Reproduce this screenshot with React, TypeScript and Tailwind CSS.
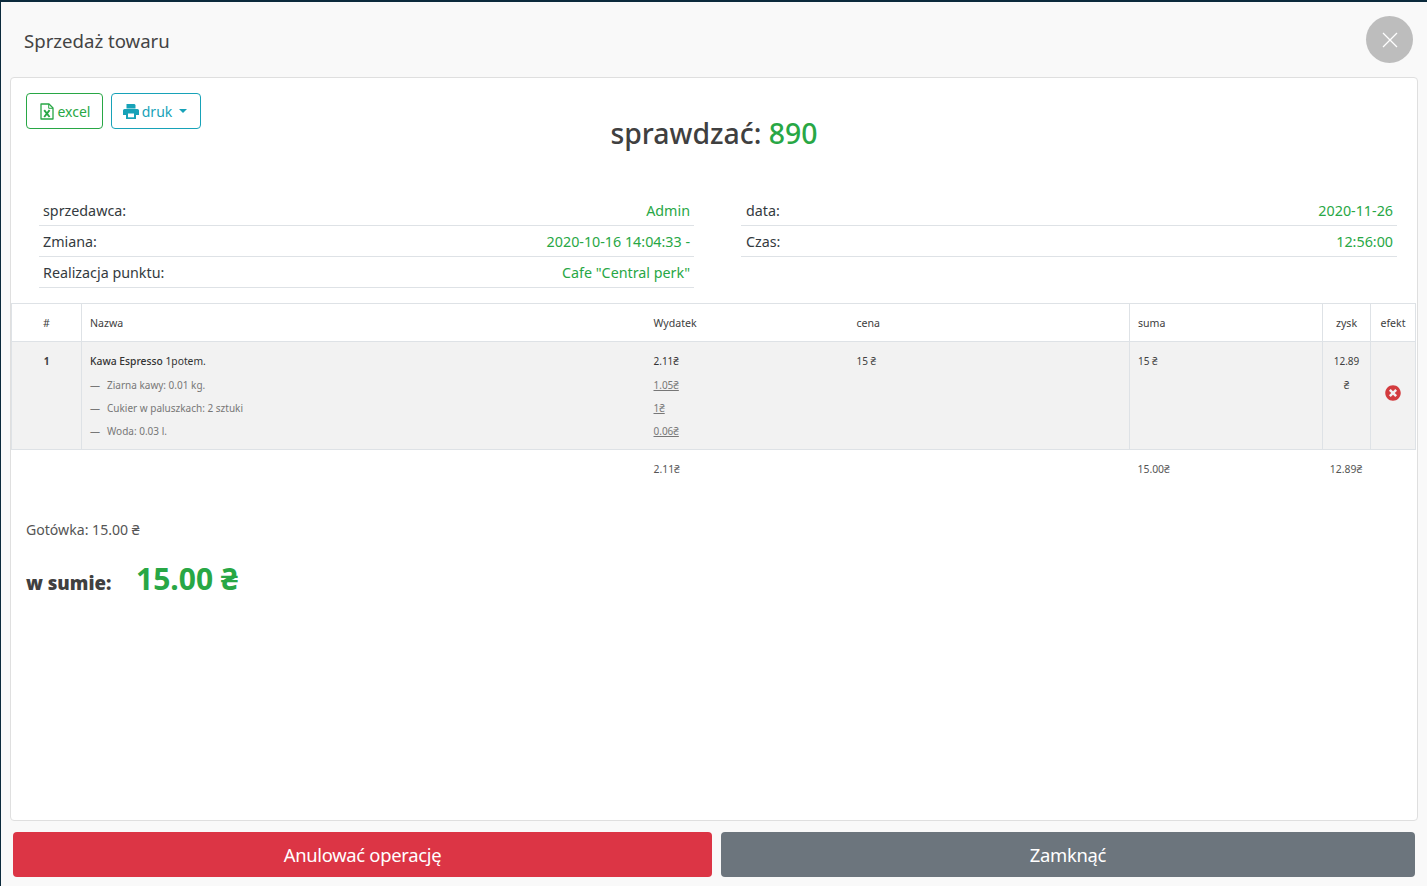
import React from "react";
import { FaTimesCircle } from "react-icons/fa";

const font = { fontFamily: '"Noto Sans", "Open Sans", sans-serif' };

function InfoRow({ label, value, inset }: { label: string; value: string; inset?: boolean }) {
  return (
    <div className={`flex h-[31px] items-center justify-between border-b border-[#dee2e6] pr-[4px] pt-[2px] text-[14.3px] ${inset ? "pl-[5px]" : "pl-[4px]"}`}>
      <span className="text-[#343a40]">{label}</span>
      <span className="text-[#28a745]">{value}</span>
    </div>
  );
}

function ExcelIcon() {
  return (
    <svg width="14" height="17" viewBox="0 0 14 17" fill="none" className="shrink-0">
      <path d="M1 1h8l4 4v11H1z" stroke="#28a745" strokeWidth="1.3" strokeLinejoin="round" />
      <path d="M8.7 1v4.3H13" stroke="#28a745" strokeWidth="1" />
      <path d="M4.2 7.2 9.6 14M9.6 7.2 4.2 14" stroke="#28a745" strokeWidth="1.9" />
    </svg>
  );
}

function PrinterIcon() {
  return (
    <svg width="16" height="15" viewBox="0 0 16 15" className="shrink-0" fill="#17a2b8">
      <path d="M3.5 0h8l1 1v3.5h-9z" />
      <path d="M1.5 5h13A1.5 1.5 0 0 1 16 6.5V11h-3v4H3v-4H0V6.500A1.500 1.500 0 0 1 1.500 5z" />
      <rect x="5" y="9.500" width="6" height="3.800" fill="white" />
    </svg>
  );
}

export default function App() {
  return (
    <div style={font} className="h-[886px] w-[1427px] overflow-hidden bg-[#0b2a3c] pl-[1px] pt-[2px] text-[#404040]">
      <div className="flex h-[884px] flex-col bg-[#f9f9f9]">
        <header className="flex h-[75px] shrink-0 items-center justify-between pl-[23px] pr-[14px]">
          <h1 className="pt-[2px] text-[18.6px] text-[#444]">Sprzedaż towaru</h1>
          <button className="flex h-[47px] w-[47px] items-center justify-center rounded-full bg-[#bdbdbd]">
            <svg width="16" height="16" viewBox="0 0 16 16" stroke="white" strokeWidth="1.3" fill="none">
              <path d="M1 1 15 15M15 1 1 15" />
            </svg>
          </button>
        </header>

        <main className="ml-[9px] mr-[9px] flex h-[744px] shrink-0 flex-col rounded-[4px] border border-[#dfdfdf] bg-white">
          <div className="relative h-[117px] shrink-0">
            <div className="absolute left-[15px] top-[15px] flex gap-[8px] text-[14px]">
              <button className="flex h-[36px] w-[77px] items-center justify-center gap-[4px] rounded-[4px] border border-[#28a745] pl-[1px] text-[#28a745]">
                <ExcelIcon />
                excel
              </button>
              <button className="flex h-[36px] w-[90px] items-center justify-center gap-[3px] rounded-[4px] border border-[#17a2b8] pr-[2px] text-[#17a2b8]">
                <PrinterIcon />
                druk
                <span className="ml-[4px] h-0 w-0 border-x-[4.5px] border-t-[4.5px] border-x-transparent border-t-[#17a2b8]" />
              </button>
            </div>
            <div className="pt-[34px] text-center text-[28.400px] font-medium leading-[42px] text-[#404040]">
              sprawdzać: <span className="text-[#28a745]">890</span>
            </div>
          </div>

          <div className="flex h-[108px] shrink-0 gap-[47px] pl-[28px] pr-[20px]">
            <div className="w-[655px]">
              <InfoRow label="sprzedawca:" value="Admin" />
              <InfoRow label="Zmiana:" value="2020-10-16 14:04:33 -" />
              <InfoRow label="Realizacja punktu:" value={'Cafe "Central perk"'} />
            </div>
            <div className="flex-1">
              <InfoRow inset label="data:" value="2020-11-26" />
              <InfoRow inset label="Czas:" value="12:56:00" />
            </div>
          </div>

          <table className="w-[1405px] table-fixed border-collapse text-[10px] text-[#404040]">
            <colgroup>
              <col className="w-[70px]" />
              <col className="w-[564px]" />
              <col className="w-[203px]" />
              <col className="w-[281px]" />
              <col className="w-[193px]" />
              <col className="w-[48px]" />
              <col className="w-[45px]" />
            </colgroup>
            <thead>
              <tr className="h-[38px] border-y border-[#dee2e6] text-[10.6px]">
                <th className="border-x border-[#dee2e6] pt-[2px] text-center font-normal">#</th>
                <th className="border-l border-[#dee2e6] pl-[8px] pt-[2px] text-left font-normal">Nazwa</th>
                <th className="pl-[8px] pt-[2px] text-left font-normal">Wydatek</th>
                <th className="pl-[8px] pt-[2px] text-left font-normal">cena</th>
                <th className="border-x border-[#dee2e6] pl-[8px] pt-[2px] text-left font-normal">suma</th>
                <th className="border-x border-[#dee2e6] pt-[2px] text-center font-normal">zysk</th>
                <th className="border-x border-[#dee2e6] pt-[2px] text-center font-normal">efekt</th>
              </tr>
            </thead>
            <tbody>
              <tr className="h-[108px] border-b border-[#dee2e6] bg-[#f2f2f2] align-top">
                <td className="border-x border-[#dee2e6] pt-[12px] text-center font-bold leading-[15px]">1</td>
                <td className="border-l border-[#dee2e6] pl-[8px] pt-[12px]">
                  <div className="h-[24px] text-[10.300px] leading-[15px] text-[#333]">
                    <span className="font-medium">Kawa Espresso</span> 1potem.
                  </div>
                  <div className="flex h-[23px] gap-[7px] leading-[15px] text-[#777]"><span>—</span><span>Ziarna kawy: 0.01 kg.</span></div>
                  <div className="flex h-[23px] gap-[7px] leading-[15px] text-[#777]"><span>—</span><span>Cukier w paluszkach: 2 sztuki</span></div>
                  <div className="flex h-[23px] gap-[7px] leading-[15px] text-[#777]"><span>—</span><span>Woda: 0.03 l.</span></div>
                </td>
                <td className="pl-[8px] pt-[12px]">
                  <div className="h-[24px] leading-[15px] text-[#333]">2.11₴</div>
                  <div className="h-[23px] leading-[15px] text-[#777] underline">1.05₴</div>
                  <div className="h-[23px] leading-[15px] text-[#777] underline">1₴</div>
                  <div className="h-[23px] leading-[15px] text-[#777] underline">0.06₴</div>
                </td>
                <td className="pl-[8px] pt-[12px] leading-[15px]">15 ₴</td>
                <td className="border-x border-[#dee2e6] pl-[8px] pt-[12px] leading-[15px]">15 ₴</td>
                <td className="border-x border-[#dee2e6] pt-[12px] text-center leading-[24px]"><div className="-mt-[5px]">12.89<br />₴</div></td>
                <td className="border-x border-[#dee2e6] pb-[6px] align-middle">
                  <FaTimesCircle className="mx-auto h-[16px] w-[16px] text-[#d33c3f]" />
                </td>
              </tr>
              <tr className="h-[38px] text-[10.400px] text-[#555]">
                <td />
                <td />
                <td className="pl-[8px] pt-[2px]">2.11₴</td>
                <td />
                <td className="pl-[8px] pt-[2px]">15.00₴</td>
                <td className="whitespace-nowrap pt-[2px] text-center"><span className="-ml-[1px]">12.89₴</span></td>
                <td />
              </tr>
            </tbody>
          </table>

          <div className="pl-[15px] pt-[31px]">
            <div className="text-[14.100px] leading-[21px] text-[#555]">Gotówka: 15.00 ₴</div>
            <div className="mt-[18px] flex items-baseline">
              <span className="w-[110px] text-[18.600px] font-black text-[#404040]">w sumie:</span>
              <span className="text-[30px] font-bold leading-[42px] text-[#28a745]">15.00 ₴</span>
            </div>
          </div>
        </main>

        <footer className="ml-[12px] mr-[12px] mt-[11px] flex gap-[9px]">
          <button className="h-[45px] w-[699px] rounded-[4px] bg-[#dc3545] pt-[1px] text-[18.400px] tracking-[-0.3px] text-white">Anulować operację</button>
          <button className="h-[45px] w-[694px] rounded-[4px] bg-[#6c757d] pt-[1px] text-[18.400px] tracking-[-0.3px] text-white">Zamknąć</button>
        </footer>
      </div>
    </div>
  );
}
